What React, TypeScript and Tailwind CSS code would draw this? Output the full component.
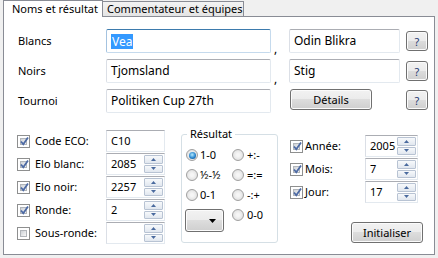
import React from 'react';

const btnCls =
  'flex items-center justify-center rounded-[3px] border border-[#707070] bg-[linear-gradient(#f2f2f2_0%,#ebebeb_50%,#dddddd_50%,#cfcfcf_100%)] shadow-[inset_0_0_0_1px_#fbfbfb] text-[11px] leading-none';

function Input({ value, w, focused }: { value: string; w: string; focused?: boolean }) {
  return (
    <div
      className={`${w} h-[24px] flex items-center rounded-[2px] border bg-white pl-[4px] text-[12px] ${
        focused ? 'border-[#c5daed] border-t-[#3d7bad] border-l-[#a4c3e0]' : 'border-[#e3e9ef] border-t-[#abadb3] border-l-[#dbdfe6]'
      }`}
    >
      {focused ? <span className="bg-[#3399ff] text-white px-[1px] leading-[15px]">{value}</span> : value}
    </div>
  );
}

function Check({ on }: { on?: boolean }) {
  return (
    <div className="relative w-[13px] h-[13px] shrink-0 border border-[#8e8f8f] bg-white p-[2px]">
      <div className="w-full h-full border border-[#b1b5ba] bg-[linear-gradient(135deg,#cdd1d6,#f7f7f7)]" />
      {on && (
        <svg className="absolute left-[1px] top-[0px]" width="11" height="11" viewBox="0 0 11 11">
          <path d="M2 5.5 L4.3 8.3 L9 1.5" fill="none" stroke="#4d6aa4" strokeWidth="1.8" />
        </svg>
      )}
    </div>
  );
}

function Radio({ on }: { on?: boolean }) {
  return (
    <div className="w-[12px] h-[12px] shrink-0 rounded-full border border-[#a0a0a0] bg-[radial-gradient(circle_at_50%_50%,#f6f6f6_20%,#d8d8d8)] flex items-center justify-center">
      {on && <div className="w-[7px] h-[7px] rounded-full bg-[radial-gradient(circle_at_45%_40%,#b6ecff_0%,#2a86cf_55%,#0d3f73_100%)]" />}
    </div>
  );
}

function Arrow({ up }: { up?: boolean }) {
  return (
    <div className="flex-1 flex items-center justify-center rounded-[1px] border border-[#b8c3d3] bg-[linear-gradient(#f7f9fb,#e1e7ef)]">
      <svg width="5" height="3" viewBox="0 0 5 3">
        <path d={up ? 'M0 3 L2.5 0 L5 3 Z' : 'M0 0 L2.5 3 L5 0 Z'} fill="#4a6a9e" />
      </svg>
    </div>
  );
}

function Spin({ value, w }: { value: string; w: string }) {
  return (
    <div className={`${w} h-[22px] flex border border-[#e3e9ef] border-t-[#abadb3] border-l-[#dbdfe6] bg-white`}>
      <div className="flex-1 pl-[4px] leading-[20px]">{value}</div>
      <div className="w-[20px] flex flex-col gap-[1px] py-[1px] pr-[1px]">
        <Arrow up />
        <Arrow />
      </div>
    </div>
  );
}

export default function App() {
  const leftRows = [
    { label: 'Elo blanc:', value: '2085', on: true },
    { label: 'Elo noir:', value: '2257', on: true },
    { label: 'Ronde:', value: '2', on: true },
    { label: 'Sous-ronde:', value: '', on: false },
  ];
  const dateRows = [
    { label: 'Année:', value: '2005' },
    { label: 'Mois:', value: '7' },
    { label: 'Jour:', value: '17' },
  ];

  return (
    <div className="w-[438px] h-[258px] bg-[#f0f0f0] px-[3px] pb-[3px] flex flex-col font-['Noto_Sans',sans-serif] text-[11px] text-black">
      <div className="relative z-10 flex items-end h-[16px]">
        <div className="h-[17px] w-[100px] -mb-[1px] bg-white border border-b-0 border-[#898c95] pl-[8px] leading-[15px]">
          Noms et résultat
        </div>
        <div className="h-[15px] w-[141px] border border-l-0 border-b-0 border-[#898c95] bg-[linear-gradient(#f3f3f3,#e4e4e4)] pl-[4px] leading-[14px]">
          Commentateur et équipes
        </div>
      </div>

      <div className="flex-1 border border-[#898c95] bg-white pt-[12px] pl-[14px]">
        <div className="flex flex-col gap-[6px]">
          <div className="flex items-center h-[24px]">
            <div className="w-[88px]">Blancs</div>
            <Input value="Vea" w="w-[165px]" focused />
            <span className="w-[18px] self-end pl-[3px] leading-[8px] text-[12px]">,</span>
            <Input value="Odin Blikra" w="w-[111px]" />
            <div className={`${btnCls} ml-[6px] w-[22px] h-[20px] text-[#1f3b73]`}>?</div>
          </div>
          <div className="flex items-center h-[24px]">
            <div className="w-[88px]">Noirs</div>
            <Input value="Tjomsland" w="w-[165px]" />
            <span className="w-[18px] self-end pl-[3px] leading-[8px] text-[12px]">,</span>
            <Input value="Stig" w="w-[111px]" />
            <div className={`${btnCls} ml-[6px] w-[22px] h-[20px] text-[#1f3b73]`}>?</div>
          </div>
          <div className="flex items-center h-[24px]">
            <div className="w-[88px]">Tournoi</div>
            <Input value="Politiken Cup 27th" w="w-[165px]" />
            <div className={`${btnCls} self-start ml-[19px] w-[82px] h-[21px]`}>Détails</div>
            <div className={`${btnCls} self-start mt-[1px] ml-[34px] w-[22px] h-[20px] text-[#1f3b73]`}>?</div>
          </div>
        </div>

        <div className="flex items-start mt-[17px] -ml-[1px]">
          <div className="flex flex-col gap-[1px]">
            <div className="flex items-center h-[22px]">
              <Check on />
              <div className="ml-[5px] w-[71px]">Code ECO:</div>
              <div className="w-[59px] h-[22px] border border-[#e3e9ef] border-t-[#abadb3] border-l-[#dbdfe6] pl-[4px] leading-[20px]">C10</div>
            </div>
            {leftRows.map(r => (
              <div key={r.label} className="flex items-center h-[22px]">
                <Check on={r.on} />
                <div className="ml-[5px] w-[71px]">{r.label}</div>
                <Spin value={r.value} w="w-[59px]" />
              </div>
            ))}
          </div>

          <fieldset className="ml-[16px] -mt-[4px] w-[97px] h-[117px] rounded-[3px] border border-[#d5dfe5]">
            <legend className="ml-[5px] px-[3px] leading-[16px]">Résultat</legend>
            <div className="grid grid-cols-[46px_auto] pt-[3px] pl-[4px]">
              <div className="flex items-center gap-[2px] h-[20px]"><Radio on />1-0</div>
              <div className="flex items-center gap-[3px] h-[20px]"><Radio />+:-</div>
              <div className="flex items-center gap-[2px] h-[20px]"><Radio />½-½</div>
              <div className="flex items-center gap-[3px] h-[20px]"><Radio />=:=</div>
              <div className="flex items-center gap-[2px] h-[20px]"><Radio />0-1</div>
              <div className="flex items-center gap-[3px] h-[20px]"><Radio />-:+</div>
              <div className="pt-[4px]">
                <div className={`${btnCls} -ml-[1px] w-[39px] h-[23px] justify-end pr-[7px]`}>
                  <svg width="7" height="4" viewBox="0 0 7 4">
                    <path d="M0 0 L7 0 L3.5 4 Z" fill="#000" />
                  </svg>
                </div>
              </div>
              <div className="flex items-start gap-[3px] pt-[4px] leading-[12px]"><Radio />0-0</div>
            </div>
          </fieldset>

          <div className="ml-[12px] mt-[5px] w-[133px] flex flex-col">
            <div className="flex flex-col gap-[1px]">
              {dateRows.map(r => (
                <div key={r.label} className="flex items-center h-[22px]">
                  <Check on />
                  <div className="ml-[2px] w-[60px]">{r.label}</div>
                  <Spin value={r.value} w="w-[53px]" />
                </div>
              ))}
            </div>
            <div className={`${btnCls} self-end mt-[19px] w-[72px] h-[21px]`}>Initialiser</div>
          </div>
        </div>
      </div>
    </div>
  );
}
